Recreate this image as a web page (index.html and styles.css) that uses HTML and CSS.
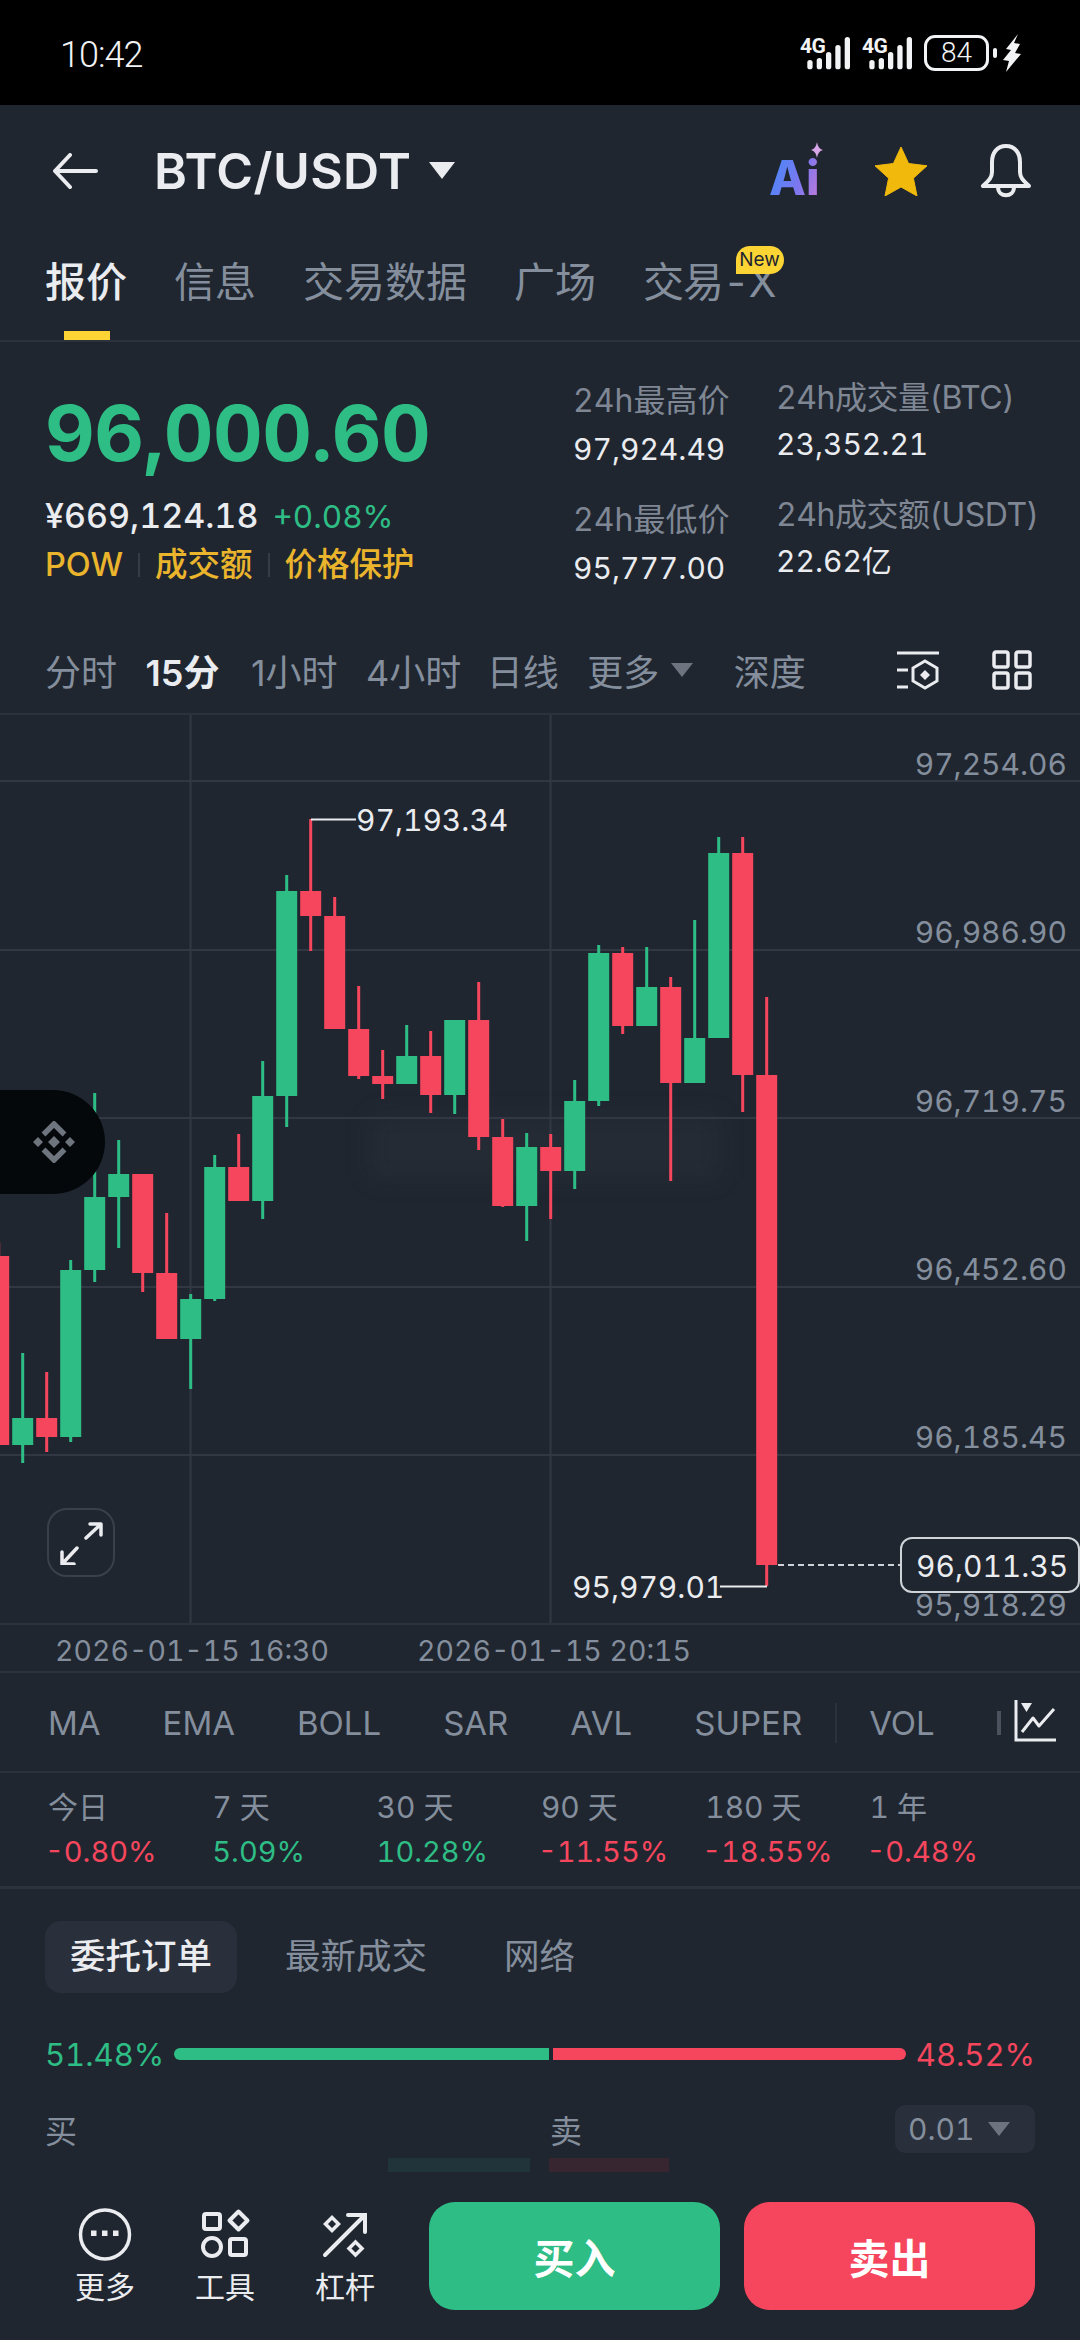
FILE: index.html
```html
<!DOCTYPE html>
<html lang="zh-CN">
  <head>
    <meta charset="UTF-8" />
    <meta name="viewport" content="width=device-width, initial-scale=1.0" />
    <title>BTC/USDT</title>
    <link rel="stylesheet" href="styles.css">
  </head>

  <body>
    <!-- Status bar -->
    <div class="status-bar">
      <span class="clock">10:42</span>
      <div class="status-icons">
        <svg class="signal" width="51" height="36" viewBox="0 0 51 36">
          <text x="0" y="18" class="net">4G</text>
          <rect x="7.300" y="25" width="5.300" height="9.300" rx="2.600" /><rect x="16.700" y="23" width="5.300" height="11.300" rx="2.600" /><rect x="26" y="17" width="5.300" height="17.300" rx="2.600" /><rect x="35.300" y="10" width="5.300" height="24.300" rx="2.600" /><rect x="44.700" y="2" width="5.300" height="32.300" rx="2.600" />
        </svg>
        <svg class="signal" width="51" height="36" viewBox="0 0 51 36">
          <text x="0" y="18" class="net">4G</text>
          <rect x="7.300" y="25" width="5.300" height="9.300" rx="2.600" /><rect x="16.700" y="23" width="5.300" height="11.300" rx="2.600" /><rect x="26" y="17" width="5.300" height="17.300" rx="2.600" /><rect x="35.300" y="10" width="5.300" height="24.300" rx="2.600" /><rect x="44.700" y="2" width="5.300" height="32.300" rx="2.600" />
        </svg>
        <span class="battery">84</span>
        <span class="battery-nub"></span>
        <svg class="bolt" width="18" height="38" viewBox="0 0 18 38">
          <path d="M15 0L3 15l5 1-8 10 6 1-3 11L18 20l-6-1 5-9-6-1z" fill="#f2f3f5" />
        </svg>
      </div>
    </div>

    <!-- Top bar -->
    <header class="topbar">
      <svg class="back" width="46" height="36" viewBox="0 0 46 36" fill="none" stroke="#eaecef" stroke-width="4" stroke-linecap="round" stroke-linejoin="round">
        <path d="M44 18H3M18 2L3 18l15 16" />
      </svg>
      <h1 class="pair">BTC/USDT</h1>
      <span class="pair-caret"></span>
      <div class="topbar-actions">
        <span class="ai-icon">
          <span class="ai-text">Ai</span>
          <svg class="ai-spark" width="16" height="16" viewBox="0 0 16 16"><path d="M8 0c.8 4.500 2.500 6.800 6 8-3.500 1.200-5.200 3.500-6 8-.8-4.500-2.500-6.800-6-8 3.500-1.200 5.200-3.500 6-8z" fill="#d9a6e8" /></svg>
        </span>
        <svg class="star" width="54" height="50" viewBox="0 0 54 50"><path d="M27 1l7.600 16.500L53 19.800 39.400 32.200 43 50 27 41 11 50l3.600-17.800L1 19.800l18.400-2.300z" fill="#f0b90b" stroke="#f0b90b" stroke-width="1" stroke-linejoin="round" /></svg>
        <svg width="52" height="54" viewBox="0 0 52 54" fill="none" stroke="#eaecef" stroke-width="4" stroke-linejoin="round">
          <path d="M26 2c-9 0-14 7-14 16v10c0 6-4 9-9 14h46c-5-5-9-8-9-14V18c0-9-5-16-14-16z" />
          <path d="M18 43c0 11 16 11 16 0" />
        </svg>
      </div>
    </header>

    <!-- Tabs -->
    <nav class="tabs">
      <a class="tab active">报价</a>
      <a class="tab">信息</a>
      <a class="tab">交易数据</a>
      <a class="tab">广场</a>
      <a class="tab tab-new">交易-X<span class="new-badge">New</span></a>
    </nav>

    <!-- Quote -->
    <section class="quote">
      <div class="quote-main">
        <div class="last-price">96,000.60</div>
        <div class="sub-price">¥669,124.18<span class="change">+0.08%</span></div>
        <div class="tags">
          <span>POW</span><i></i><span>成交额</span><i></i><span>价格保护</span>
        </div>
      </div>
      <div class="stats stats-a">
        <div class="stat-label">24h最高价</div>
        <div class="stat-value">97,924.49</div>
        <div class="stat-label">24h最低价</div>
        <div class="stat-value">95,777.00</div>
      </div>
      <div class="stats stats-b">
        <div class="stat-label">24h成交量(BTC)</div>
        <div class="stat-value">23,352.21</div>
        <div class="stat-label">24h成交额(USDT)</div>
        <div class="stat-value">22.62亿</div>
      </div>
    </section>

    <!-- Intervals -->
    <div class="intervals">
      <span>分时</span>
      <span class="current">15分</span>
      <span>1小时</span>
      <span>4小时</span>
      <span class="daily">日线</span>
      <span class="more">更多<b class="caret"></b></span>
      <span class="depth">深度</span>
      <div class="interval-icons">
        <svg width="44" height="40" viewBox="0 0 44 40" fill="none" stroke="#eaecef" stroke-width="3">
          <path d="M1 3h42M1 20h11M1 37h11" />
          <path d="M29 11l12 7v13l-12 7-12-7V18z" />
          <path d="M29 20l5 5-5 5-5-5z" fill="#eaecef" stroke="none" />
        </svg>
        <svg width="40" height="40" viewBox="0 0 40 40" fill="none" stroke="#eaecef" stroke-width="3.500">
          <rect x="2" y="2" width="14" height="15" rx="2" /><rect x="24" y="2" width="14" height="15" rx="2" /><rect x="2" y="23" width="14" height="15" rx="2" /><rect x="24" y="23" width="14" height="15" rx="2" />
        </svg>
      </div>
    </div>

    <!-- Chart -->
    <section class="chart">
      <div class="smudge"></div>
      <svg class="chart-svg" width="1080" height="908" viewBox="0 715 1080 908">
        <g class="grid">
          <path d="M0 781H1080M0 950H1080M0 1118H1080M0 1287H1080M0 1455H1080M190.500 715V1623M550.500 715V1623" />
        </g>
        <g class="up">
          <path d="M22.700 1353V1463M70.700 1260V1442M94.700 1093V1282M118.700 1140V1248M190.700 1294V1389M214.700 1155V1301M262.700 1061V1219M286.700 875V1127M406.700 1025V1084M454.700 1020V1114M526.700 1133V1241M574.700 1080V1189M598.700 945V1106M646.700 947V1025M694.700 920V1083M718.700 837V1038" />
          <rect x="12.200" y="1418" width="21" height="27" />
          <rect x="60.200" y="1270" width="21" height="167" />
          <rect x="84.200" y="1197" width="21" height="73" />
          <rect x="108.200" y="1174" width="21" height="23" />
          <rect x="180.200" y="1299" width="21" height="40" />
          <rect x="204.200" y="1167" width="21" height="132" />
          <rect x="252.200" y="1096" width="21" height="105" />
          <rect x="276.200" y="891" width="21" height="205" />
          <rect x="396.200" y="1056" width="21" height="28" />
          <rect x="444.200" y="1020" width="21" height="75" />
          <rect x="516.200" y="1147" width="21" height="59" />
          <rect x="564.200" y="1101" width="21" height="70" />
          <rect x="588.200" y="953" width="21" height="148" />
          <rect x="636.200" y="987" width="21" height="39" />
          <rect x="684.200" y="1038" width="21" height="45" />
          <rect x="708.200" y="853" width="21" height="185" />
        </g>
        <g class="down">
          <path d="M-1.300 1243V1445M46.700 1372V1452M142.700 1174V1292M166.700 1213V1339M238.700 1134V1201M310.700 819V951M334.700 897V1029M358.700 986V1079M382.700 1050V1099M430.700 1031V1113M478.700 982V1150M502.700 1119V1207M550.700 1134V1219M622.700 947V1034M670.700 977V1181M742.700 837V1112M766.700 997V1586" />
          <rect x="-11.800" y="1256" width="21" height="189" />
          <rect x="36.200" y="1418" width="21" height="19" />
          <rect x="132.200" y="1174" width="21" height="99" />
          <rect x="156.200" y="1273" width="21" height="66" />
          <rect x="228.200" y="1167" width="21" height="34" />
          <rect x="300.200" y="891" width="21" height="25" />
          <rect x="324.200" y="916" width="21" height="113" />
          <rect x="348.200" y="1029" width="21" height="47" />
          <rect x="372.200" y="1076" width="21" height="8" />
          <rect x="420.200" y="1056" width="21" height="39" />
          <rect x="468.200" y="1020" width="21" height="117" />
          <rect x="492.200" y="1137" width="21" height="69" />
          <rect x="540.200" y="1147" width="21" height="24" />
          <rect x="612.200" y="953" width="21" height="73" />
          <rect x="660.200" y="987" width="21" height="96" />
          <rect x="732.200" y="853" width="21" height="222" />
          <rect x="756.200" y="1075" width="21" height="490" />
        </g>
        <path class="marker" d="M311 819.500H356M720 1586.500H767" />
        <path class="last-line" d="M778 1565H900" />
      </svg>

      <div class="y-axis">
        <span>97,254.06</span>
        <span>96,986.90</span>
        <span>96,719.75</span>
        <span>96,452.60</span>
        <span>96,185.45</span>
        <span>95,918.29</span>
      </div>

      <span class="mark mark-high">97,193.34</span>
      <span class="mark mark-low">95,979.01</span>
      <span class="last-tag">96,011.35</span>

      <div class="float-logo">
        <svg width="42" height="42" viewBox="0 0 42 42">
          <path d="M10.500 13.500L21 3l10.500 10.500M10.500 28.500L21 39l10.500-10.500" fill="none" stroke="#6f757f" stroke-width="5.500" />
          <path d="M21 15l6 6-6 6-6-6zM5 16l5 5-5 5-5-5zM37 16l5 5-5 5-5-5z" fill="#6f757f" />
        </svg>
      </div>

      <div class="expand">
        <svg width="44" height="44" viewBox="0 0 44 44" fill="none" stroke="#eaecef" stroke-width="3.500" stroke-linecap="round" stroke-linejoin="round">
          <path d="M31 3h11v11M41 4L27 17M3 31v12h12M4 42L18 27" />
        </svg>
      </div>
    </section>

    <div class="time-axis">
      <span>2026-01-15 16:30</span>
      <span>2026-01-15 20:15</span>
    </div>

    <!-- Indicators -->
    <div class="indicators">
      <span>MA</span>
      <span>EMA</span>
      <span>BOLL</span>
      <span>SAR</span>
      <span>AVL</span>
      <span>SUPER</span>
      <i class="indicator-sep"></i>
      <span>VOL</span>
      <i class="indicator-clip"></i>
      <svg class="indicator-icon" width="44" height="42" viewBox="0 0 44 42" fill="none" stroke="#eaecef" stroke-width="3">
        <path d="M2 0v40h40" />
        <path d="M8 32l11-14 6 8L40 9" stroke-linejoin="round" />
        <path d="M7 3h11l-5.500 9z" fill="#eaecef" stroke="none" />
      </svg>
    </div>

    <!-- Period change -->
    <div class="periods">
      <div><span>今日</span><b class="neg">-0.80%</b></div>
      <div><span>7 天</span><b class="pos">5.09%</b></div>
      <div><span>30 天</span><b class="pos">10.28%</b></div>
      <div><span>90 天</span><b class="neg">-11.55%</b></div>
      <div><span>180 天</span><b class="neg">-18.55%</b></div>
      <div><span>1 年</span><b class="neg">-0.48%</b></div>
    </div>

    <!-- Order book -->
    <section class="book">
      <div class="book-tabs">
        <span class="book-tab active">委托订单</span>
        <span class="book-tab">最新成交</span>
        <span class="book-tab network">网络</span>
      </div>

      <div class="ratio">
        <span class="pos">51.48%</span>
        <div class="ratio-bar">
          <span class="ratio-buy"></span>
          <span class="ratio-sell"></span>
        </div>
        <span class="neg">48.52%</span>
      </div>

      <div class="book-head">
        <span class="book-buy">买</span>
        <span>卖</span>
        <span class="step">0.01<b class="caret"></b></span>
      </div>

      <div class="depth-bars">
        <span class="depth-buy"></span>
        <span class="depth-sell"></span>
      </div>
    </section>

    <!-- Bottom actions -->
    <footer class="actions">
      <div class="tool">
        <svg width="56" height="56" viewBox="0 0 56 56" fill="none" stroke="#eaecef" stroke-width="3.500">
          <circle cx="28" cy="28.500" r="24.500" />
          <path d="M14 24.500h5.500V30H14zM25 24.500h5.500V30H25zM36 24.500h5.500V30H36z" fill="#eaecef" stroke="none" />
        </svg>
        <span>更多</span>
      </div>
      <div class="tool">
        <svg width="56" height="56" viewBox="0 0 56 56" fill="none" stroke="#eaecef" stroke-width="4" stroke-linejoin="round">
          <rect x="7" y="8" width="16" height="15" rx="2" />
          <path d="M41.500 5.500l9 9-9 9-9-9z" />
          <circle cx="15" cy="41" r="9" />
          <rect x="33" y="33" width="16" height="16" rx="2" />
        </svg>
        <span>工具</span>
      </div>
      <div class="tool">
        <svg width="56" height="56" viewBox="0 0 56 56" fill="none" stroke="#eaecef" stroke-width="3.500">
          <path d="M15 11.500l6.500 6.500-6.500 6.500L8.500 18zM38.500 36l6.500 6.500-6.500 6.500-6.500-6.500z" />
          <path d="M8 49L47 10M31 9h17v17" stroke-width="4" stroke-linecap="round" />
        </svg>
        <span>杠杆</span>
      </div>
      <button class="trade trade-buy">买入</button>
      <button class="trade trade-sell">卖出</button>
    </footer>
  </body>
</html>
```

FILE: styles.css
```css
* {
  margin: 0;
  padding: 0;
  box-sizing: border-box;
}

body {
  width: 1080px;
  height: 2340px;
  overflow: hidden;
  background: #1f2630;
  color: #eaecef;
  font-family: Inter, "Noto Sans CJK SC", sans-serif;
  font-variant-numeric: tabular-nums;
}

/* Status bar */
.status-bar {
  height: 105px;
  background: #000;
  display: flex;
  align-items: center;
  justify-content: space-between;
  padding: 0 59px 0 60px;
  color: #f2f3f5;
}

.clock {
  margin-top: 5px;
  font-family: Roboto, sans-serif;
  font-weight: 300;
  font-size: 36px;
  letter-spacing: -1px;
}

.status-icons {
  display: flex;
  align-items: center;
}

.signal {
  margin-right: 11px;
}

.signal rect {
  fill: #f2f3f5;
}

.net {
  font-family: Roboto, sans-serif;
  font-size: 21px;
  font-weight: 700;
  letter-spacing: -0.5px;
  fill: #f2f3f5;
}

.battery {
  width: 65px;
  height: 36px;
  border: 3px solid #f2f3f5;
  border-radius: 11px;
  display: flex;
  align-items: center;
  justify-content: center;
  font-family: Roboto, sans-serif;
  font-size: 28px;
  font-weight: 300;
}

.battery-nub {
  width: 4px;
  height: 10px;
  margin-left: 4px;
  border-radius: 2px;
  background: #f2f3f5;
}

.bolt {
  margin-left: 6px;
}

/* Top bar */
.topbar {
  height: 131px;
  display: flex;
  align-items: center;
  padding: 0 48px 0 52px;
}

.pair {
  margin-left: 56px;
  font-size: 50px;
  font-weight: 600;
  letter-spacing: 0.4px;
}

.pair-caret {
  width: 0;
  height: 0;
  margin-left: 18px;
  border-left: 13px solid transparent;
  border-right: 13px solid transparent;
  border-top: 17px solid #eaecef;
}

.topbar-actions {
  margin-left: auto;
  display: flex;
  align-items: center;
  gap: 49px;
}

.star {
  margin-right: 3px;
}

.ai-icon {
  position: relative;
  display: block;
  width: 56px;
  height: 50px;
  margin-top: 8px;
}

.ai-text {
  display: block;
  font-size: 48px;
  line-height: 56px;
  font-weight: 800;
  background: linear-gradient(110deg, #4f86f7 15%, #7d77ef 55%, #c47ad8 90%);
  -webkit-background-clip: text;
  background-clip: text;
  color: transparent;
}

.ai-spark {
  position: absolute;
  right: 0;
  top: -8px;
}

/* Tabs */
.tabs {
  height: 106px;
  padding: 0 0 19px 45px;
  display: flex;
  align-items: center;
  gap: 47px;
  border-bottom: 2px solid #2c323c;
  font-size: 41px;
  color: #848e9c;
}

.tab {
  position: relative;
}

.tab.active {
  color: #eaecef;
  font-weight: 500;
}

.tab.active::after {
  content: "";
  position: absolute;
  left: 19px;
  bottom: -31px;
  width: 46px;
  height: 9px;
  background: #fcd535;
}

.tab-new {
  letter-spacing: -1px;
}

.new-badge {
  position: absolute;
  right: -8px;
  top: -3px;
  width: 48px;
  height: 28px;
  border-radius: 14px 14px 14px 0;
  background: #fcd535;
  color: #1f2630;
  font-size: 19px;
  line-height: 28px;
  letter-spacing: 0;
  text-align: center;
}

/* Quote */
.quote {
  height: 285px;
  display: flex;
}

.quote-main {
  width: 573px;
  padding: 50px 0 0 45px;
}

.last-price {
  font-size: 77px;
  line-height: 82px;
  font-weight: 700;
  color: #2ebd85;
  letter-spacing: -0.5px;
}

.sub-price {
  margin-top: 22px;
  font-size: 34px;
  line-height: 40px;
  font-weight: 500;
}

.change {
  margin-left: 14px;
  color: #2ebd85;
  font-weight: 400;
  font-size: 31.500px;
}

.tags {
  margin-top: 8px;
  display: flex;
  align-items: center;
  font-size: 32.500px;
  line-height: 40px;
  color: #eab52c;
  font-weight: 500;
}

.tags i {
  width: 2px;
  height: 24px;
  margin: 0 15px;
  background: #363c46;
}

.stats {
  font-size: 32px;
  line-height: 40px;
}

.stats-a {
  width: 203px;
  padding-top: 39px;
}

.stats-b {
  padding-top: 36px;
}

.stat-label {
  color: #7f8794;
  white-space: nowrap;
}

.stats-b .stat-label {
  letter-spacing: -0.5px;
}

.stat-value {
  margin-top: 8px;
  margin-bottom: 31px;
  font-size: 30px;
  white-space: nowrap;
}

.stats-b .stat-value {
  margin-top: 6px;
}

/* Intervals */
.intervals {
  height: 88px;
  padding-left: 45px;
  display: flex;
  align-items: center;
  gap: 28.500px;
  border-bottom: 2px solid #2c323c;
  font-size: 36px;
  font-variant-numeric: normal;
  color: #848e9c;
}

.intervals .current {
  margin-right: 3px;
  color: #eaecef;
  font-weight: 600;
}

.intervals .daily {
  margin-left: -3px;
}

.more {
  display: flex;
  align-items: center;
  gap: 12px;
}

.caret {
  display: block;
  width: 0;
  height: 0;
  border-left: 11px solid transparent;
  border-right: 11px solid transparent;
  border-top: 14px solid #6d7480;
}

.depth {
  margin-left: 12px;
}

.interval-icons {
  margin-left: auto;
  padding-right: 48px;
  display: flex;
  align-items: center;
  gap: 52px;
}

/* Chart */
.chart {
  position: relative;
  height: 908px;
  overflow: hidden;
  font-size: 30px;
  line-height: 32px;
}

.smudge {
  position: absolute;
  left: 370px;
  top: 400px;
  width: 350px;
  height: 64px;
  background: rgba(70, 80, 90, 0.12);
  filter: blur(12px);
}

.chart-svg {
  position: absolute;
  left: 0;
  top: 0;
}

.grid path {
  fill: none;
  stroke: #323843;
  stroke-width: 2;
}

.up rect {
  fill: #2ebd85;
}

.up path {
  stroke: #2ebd85;
  stroke-width: 3;
}

.down rect {
  fill: #f6465d;
}

.down path {
  stroke: #f6465d;
  stroke-width: 3;
}

.marker {
  fill: none;
  stroke: #eaecef;
  stroke-width: 2;
}

.last-line {
  fill: none;
  stroke: #cfd3d8;
  stroke-width: 2;
  stroke-dasharray: 6 4;
}

.y-axis {
  position: absolute;
  right: 13px;
  top: 33px;
  display: flex;
  flex-direction: column;
  align-items: flex-end;
  gap: 136.300px;
  color: #848e9c;
}

.mark {
  position: absolute;
  color: #eaecef;
}

.mark-high {
  left: 356px;
  top: 89px;
}

.mark-low {
  left: 572px;
  top: 856px;
}

.last-tag {
  position: absolute;
  right: 0;
  top: 822px;
  width: 180px;
  height: 56px;
  padding-left: 14px;
  border: 2px solid #cfd3d8;
  border-radius: 12px;
  background: #1f2630;
  line-height: 54px;
}

.float-logo {
  position: absolute;
  left: 0;
  top: 375px;
  width: 105px;
  height: 104px;
  padding-left: 3px;
  border-radius: 0 52px 52px 0;
  background: #05080b;
  display: flex;
  align-items: center;
  justify-content: center;
}

.expand {
  position: absolute;
  left: 47px;
  top: 793px;
  width: 68px;
  height: 69px;
  border: 2px solid #3a404b;
  border-radius: 20px;
  display: flex;
  align-items: center;
  justify-content: center;
}

.time-axis {
  height: 50px;
  padding: 8px 0 0 55px;
  display: flex;
  gap: 88px;
  border-top: 2px solid #2c323c;
  border-bottom: 2px solid #2c323c;
  font-size: 28.500px;
  line-height: 36px;
  color: #848e9c;
}

/* Indicators */
.indicators {
  position: relative;
  height: 100px;
  padding: 2px 0 0 48px;
  display: flex;
  align-items: center;
  border-bottom: 2px solid #2c323c;
  font-size: 33px;
  color: #848e9c;
}

.indicators span {
  margin-right: 62px;
}

.indicator-sep {
  width: 2px;
  height: 40px;
  margin: 0 32px 0 -29px;
  background: #2c323c;
}

.indicator-clip {
  width: 4px;
  height: 24px;
  background: #4b525d;
}

.indicator-icon {
  position: absolute;
  left: 1014px;
  top: 27px;
}

/* Period change */
.periods {
  height: 116px;
  padding: 14px 0 0 48px;
  display: grid;
  grid-template-columns: repeat(6, 164.300px);
  border-bottom: 3px solid #2c323c;
  font-size: 30px;
  line-height: 40px;
}

.periods span {
  display: block;
  color: #848e9c;
}

.periods b {
  display: block;
  margin-top: 5px;
  font-weight: 400;
  font-size: 29px;
}

.periods .neg {
  margin-left: -3px;
}

.pos {
  color: #2ebd85;
}

.neg {
  color: #f6465d;
}

/* Order book */
.book {
  padding: 32px 45px 0;
}

.book-tabs {
  display: flex;
  align-items: center;
  gap: 48px;
  font-size: 35.500px;
  color: #848e9c;
}

.book-tab {
  height: 72px;
  line-height: 72px;
}

.book-tab.active {
  padding: 0 25px;
  background: #2a303b;
  border-radius: 16px;
  color: #eaecef;
  font-weight: 500;
}

.network {
  margin-left: 29px;
}

.ratio {
  margin-top: 41px;
  height: 40px;
  display: flex;
  align-items: center;
  justify-content: space-between;
  font-size: 31px;
  white-space: nowrap;
}

.ratio-bar {
  width: 732px;
  height: 12px;
  display: flex;
  gap: 4px;
}

.ratio-buy {
  width: 375px;
  border-radius: 6px 0 0 6px;
  background: #2ebd85;
}

.ratio-sell {
  flex: 1;
  border-radius: 0 6px 6px 0;
  background: #f6465d;
}

.book-head {
  margin-top: 31px;
  height: 48px;
  display: flex;
  align-items: center;
  font-size: 32px;
  color: #848e9c;
}

.book-buy {
  width: 505px;
}

.step {
  margin-left: auto;
  width: 140px;
  height: 48px;
  padding-left: 13px;
  display: flex;
  align-items: center;
  gap: 14px;
  background: #2a303b;
  border-radius: 10px;
  font-size: 30px;
}

.depth-bars {
  margin-top: 5px;
  padding-left: 343px;
  display: flex;
  gap: 19px;
}

.depth-buy {
  width: 142px;
  height: 14px;
  background: #20343a;
}

.depth-sell {
  width: 120px;
  height: 14px;
  background: #37262f;
}

/* Bottom actions */
.actions {
  margin-top: 30px;
  height: 108px;
  padding-left: 45px;
  display: flex;
}

.tool {
  width: 120px;
  padding-top: 4px;
  display: flex;
  flex-direction: column;
  align-items: center;
  gap: 7px;
  font-size: 30px;
  line-height: 36px;
}

.trade {
  width: 291px;
  height: 108px;
  margin-left: 24px;
  border: none;
  border-radius: 26px;
  color: #fff;
  font-family: inherit;
  font-size: 41px;
  font-weight: 700;
}

.trade-buy {
  background: #2ebd85;
}

.trade-sell {
  background: #f6465d;
}
```
